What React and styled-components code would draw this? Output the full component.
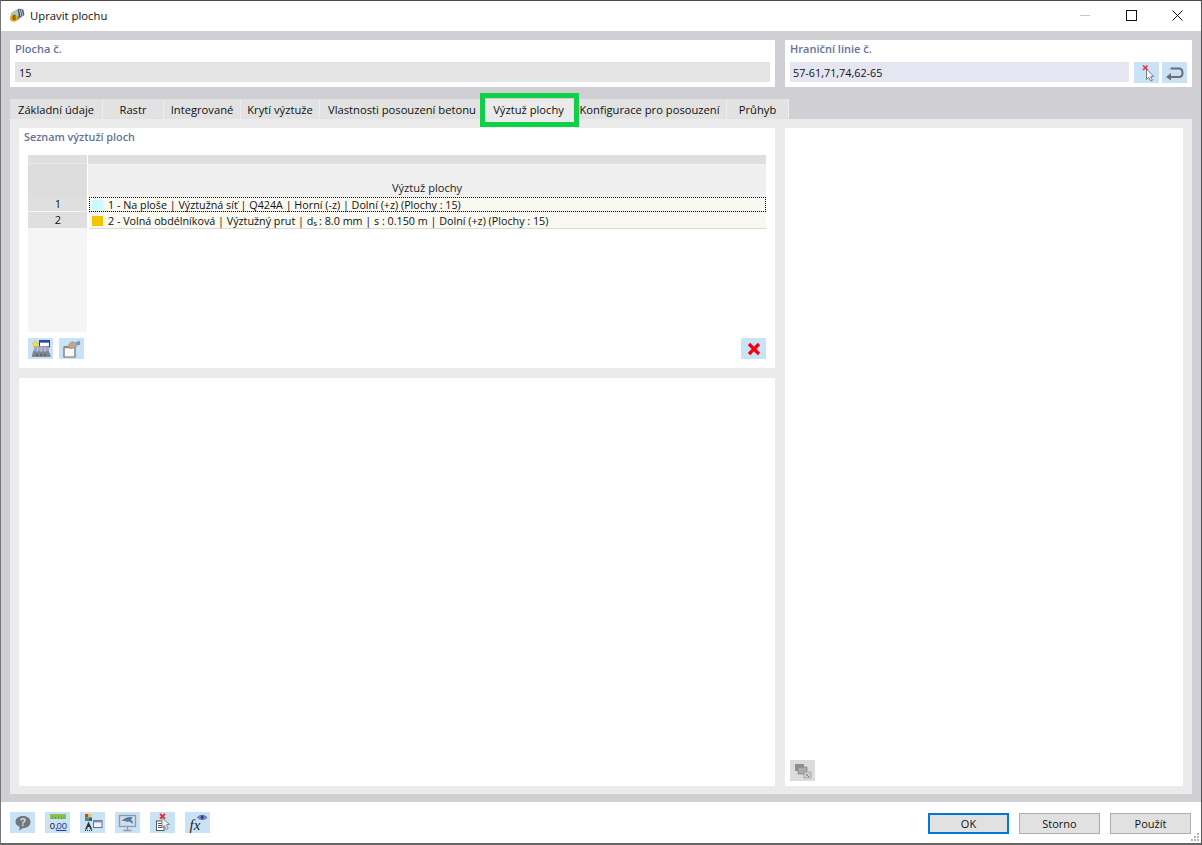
import React from "react"
import styled, { createGlobalStyle } from "styled-components"

const GlobalStyle = createGlobalStyle`
  html, body { margin: 0; padding: 0; background: #d0cfd4; }
  * { box-sizing: border-box; }
  body { font-family: "Open Sans", "Noto Sans", "Liberation Sans", sans-serif; font-size: 11px; color: #111; }
`

const Window = styled.div`
  width: 1202px;
  height: 845px;
  display: flex;
  flex-direction: column;
  background: #fff;
  border: 1px solid #777;
  border-top: 1px solid #4c4a48;
  border-right-color: #555;
  border-bottom: 2px solid #666;
  overflow: hidden;
`

const TitleBar = styled.div`
  height: 30px;
  flex: none;
  display: flex;
  align-items: center;
  padding: 0 0 2px 8px;
  background: #fff;
`

const TitleText = styled.span`
  margin-left: 5px;
  font-size: 11.3px;
  color: #111;
`

const WindowButtons = styled.div`
  margin-left: auto;
  display: flex;
  align-items: center;
  padding-right: 1px;
`

const WindowButton = styled.div`
  width: 46px;
  height: 28px;
  display: flex;
  align-items: center;
  justify-content: center;
`

const Body = styled.div`
  flex: 1;
  min-height: 0;
  background: #d0cfd4;
  padding: 9px 9px 8px 9px;
  display: flex;
  flex-direction: column;
`

const TopRow = styled.div`
  display: grid;
  grid-template-columns: 765px 407px;
  gap: 10px;
  height: 47px;
  flex: none;
`

const HeadPanel = styled.div`
  background: #fff;
  padding: 2px 5px 5px;
  display: flex;
  flex-direction: column;
`

const HeadLabel = styled.div`
  height: 17px;
  line-height: 13px;
  font-size: 11px;
  font-weight: 600;
  color: #64729a;
`

const FieldRow = styled.div`
  display: flex;
  margin-top: 3px;
  height: 20px;
`

const Field = styled.div`
  flex: 1;
  height: 20px;
  line-height: 21px;
  font-size: 10.8px;
  padding-left: ${p => p.$pad || 4}px;
  background: ${p => p.$bg || "#e4e4e4"};
`

const IconButton = styled.div`
  width: 25px;
  height: 21px;
  flex: none;
  margin-left: ${p => p.$gap || 0}px;
  background: ${p => p.$bg || "#cae2f6"};
  display: flex;
  align-items: center;
  justify-content: center;
`

const TabStrip = styled.div`
  display: flex;
  margin-top: 12px;
  height: 20px;
  flex: none;
`

const Tab = styled.div`
  position: relative;
  width: ${p => p.$w}px;
  height: 20px;
  line-height: 21px;
  font-size: 11.2px;
  text-align: center;
  white-space: nowrap;
  background: ${p => (p.$active ? "#ebebeb" : "#e2e2e2")};
  border-right: 1px solid #ededed;
`

const Highlight = styled.div`
  position: absolute;
  z-index: 1;
  left: -5px;
  right: -7px;
  top: -6px;
  bottom: -8px;
  border: 5px solid #0fd149;
`

const TabPage = styled.div`
  flex: 1;
  min-height: 0;
  background: #ebebeb;
  padding: 9px 9px 8px 9px;
  display: grid;
  grid-template-columns: 756px 398px;
  column-gap: 10px;
`

const LeftColumn = styled.div`
  display: flex;
  flex-direction: column;
  gap: 10px;
  min-height: 0;
`

const ListPanel = styled.div`
  height: 240px;
  flex: none;
  background: #fff;
  padding: 2px 9px 0;
`

const SectionLabel = styled.div`
  height: 25px;
  margin-left: -4px;
  line-height: 13px;
  font-size: 10.8px;
  font-weight: 600;
  color: #64729a;
`

const Table = styled.div`
  display: grid;
  grid-template-columns: 59px 1fr;
  column-gap: 1px;
  height: 177px;
`

const NumberColumn = styled.div`
  display: flex;
  flex-direction: column;
  background: #f5f5f5;
`

const CornerTop = styled.div`
  height: 9px;
  flex: none;
  background: #dfdfdf;
  border-bottom: 1px solid #e8e8e8;
`

const CornerCell = styled.div`
  height: 33px;
  flex: none;
  background: #dddddd;
`

const NumberCell = styled.div`
  height: ${p => p.$h}px;
  line-height: ${p => p.$h - 2}px;
  flex: none;
  padding-left: 1px;
  text-align: center;
  background: #dfdfdf;
  border-bottom: 1px solid #f5f5f5;
`

const DataColumn = styled.div`
  display: flex;
  flex-direction: column;
`

const HeaderTop = styled.div`
  height: 9px;
  flex: none;
  background: #dfdfdf;
`

const HeaderCell = styled.div`
  height: 33px;
  flex: none;
  padding-bottom: 2px;
  background: #efefef;
  display: flex;
  align-items: flex-end;
  justify-content: center;
  font-size: 11.1px;
  color: #222;
  border-top: 1px solid #f4f4f4;
`

const DataRow = styled.div`
  height: ${p => p.$h}px;
  flex: none;
  display: flex;
  align-items: center;
  padding: 1px 0 0 3px;
  margin-left: 1px;
  font-size: 10.75px;
  background: #f9f9f1;
  white-space: pre;
  border-bottom: 1px solid #dcdcd6;
  outline: ${p => (p.$focus ? "1px dotted #111" : "none")};
  outline-offset: -1px;
`

const Swatch = styled.span`
  width: 11px;
  height: 10px;
  flex: none;
  margin-right: 5px;
  background: ${p => p.$color};
`

const Sub = styled.span`
  font-size: 8px;
  position: relative;
  top: 2px;
  margin-right: 2px;
`

const ListTools = styled.div`
  display: flex;
  margin-top: 6px;
  gap: 6px;
`

const DeleteSlot = styled.div`
  margin-left: auto;
`

const Blank = styled.div`
  flex: 1;
  min-height: 0;
  background: #fff;
`

const RightPanel = styled.div`
  background: #fff;
  display: flex;
  flex-direction: column;
  justify-content: flex-end;
  padding: 0 0 5px 5px;
`

const Footer = styled.div`
  height: 41px;
  flex: none;
  position: relative;
  background: #fff;
  display: flex;
  align-items: flex-start;
  padding: 10px 10px 0 9px;
`

const FooterTools = styled.div`
  display: flex;
  gap: 10px;
`

const FooterButtons = styled.div`
  margin-left: auto;
  margin-top: 1px;
  display: flex;
  gap: 10px;
`

const DialogButton = styled.div`
  width: 81px;
  height: 21px;
  line-height: ${p => (p.$primary ? 18 : 19)}px;
  text-align: center;
  font-size: 11px;
  background: #e1e1e1;
  border: ${p => (p.$primary ? "2px solid #0078d7" : "1px solid #adadad")};
`

const Grip = styled.svg`
  position: absolute;
  right: 1px;
  bottom: 1px;
`

const AppIcon = () => (
  <svg width="16" height="16" viewBox="0 0 16 16">
    <path d="M2 6 L10 1.5 L14.5 2.5 L15.5 8 L8 13.5 L3 12 Z" fill="#7f8da0" />
    <path d="M9 2 L14 3 L15 8 L10 10.5 Z" fill="#3f4f66" />
    <path d="M10.5 2.5 L12 9.5 M12.5 3 L13.6 8.5" stroke="#c7d0dc" strokeWidth="1" />
    <path d="M2 6 L8.5 3 L9.5 9 L4 11 Z" fill="#b9c2ce" />
    <circle cx="4.8" cy="11" r="3.8" fill="#dcae1e" />
    <text x="3.2" y="13.4" fontSize="6.5" fontWeight="700" fill="#5a4400" fontFamily="Liberation Sans, sans-serif">6</text>
  </svg>
)

const CursorX = () => (
  <svg width="22" height="20" viewBox="0 0 22 20">
    <path d="M10.5 6 L10.5 16.5 L12.8 14.4 L14.6 18 L16.4 17.2 L14.7 13.6 L17.8 13.4 Z" fill="#f6f6f6" stroke="#808080" strokeWidth="1" />
    <path d="M7 2.5 L11.5 7 M11.5 2.5 L7 7" stroke="#f0303c" strokeWidth="1.7" />
  </svg>
)

const ReturnArrow = () => (
  <svg width="20" height="16" viewBox="0 0 20 16">
    <path d="M5 12 L14 12 Q17.5 12 17.5 8 Q17.5 3.5 14 3.5 L5.5 3.5" fill="none" stroke="#6b6f73" strokeWidth="2" />
    <path d="M1 12 L6 8 L6 15.5 Z" fill="#6b6f73" />
  </svg>
)

const NewSurfaceIcon = () => (
  <svg width="20" height="18" viewBox="0 0 20 18">
    <rect x="8.5" y="0.5" width="10" height="6.5" fill="#fff" stroke="#2a3f8f" />
    <rect x="8.5" y="0.5" width="10" height="2.2" fill="#2a4fb0" />
    <path d="M4 6 L18 6 L18 12 L2 12 Z" fill="#8488a8" />
    <path d="M3 8 H18 M3 10 H18 M7 6 L6 12 M10.5 6 L10 12 M14 6 L14 12" stroke="#d8dae8" strokeWidth="0.7" />
    <path d="M4.5 0.5 L5.5 3 L8 3.2 L6 5 L6.8 7.5 L4.5 6.2 L2.2 7.5 L3 5 L1 3.2 L3.5 3 Z" fill="#f7e13a" stroke="#c9b21a" strokeWidth="0.4" />
    <path d="M2 12 L18 12 L19.5 14.5 L19.5 17 L1 17 L1 14.5 Z" fill="#85858d" />
    <circle cx="6" cy="15" r="0.8" fill="#1f2f80" />
    <circle cx="10" cy="15" r="0.8" fill="#1f2f80" />
    <circle cx="14" cy="15" r="0.8" fill="#1f2f80" />
  </svg>
)

const CopyHandIcon = () => (
  <svg width="20" height="18" viewBox="0 0 20 18">
    <path d="M2 7 L2 17 L13 17 L13 7 Z" fill="#f8f8f8" stroke="#6f6f6f" strokeWidth="1.2" />
    <rect x="2" y="6" width="11" height="2.2" fill="#8a8a8a" />
    <path d="M6 7 Q7 2.5 10 2 Q13.5 1.5 14.5 4 Q15.5 7 12 8 L8 8.5 Z" fill="#c4a696" stroke="#8d7468" strokeWidth="0.5" />
    <path d="M13.5 2.5 L17.5 0.5 L18.5 4.5 L15.5 5.5 Z" fill="#6f97cf" />
  </svg>
)

const RedCross = () => (
  <svg width="14" height="14" viewBox="0 0 14 14">
    <path d="M2 2 L12 12 M12 2 L2 12" stroke="#f5000f" strokeWidth="3.2" />
  </svg>
)

const CopyGrayIcon = () => (
  <svg width="20" height="18" viewBox="0 0 20 18">
    <rect x="2" y="2" width="9" height="7" fill="#8f8f8f" />
    <rect x="5" y="5" width="9" height="7" fill="#aaa" stroke="#777" strokeWidth="0.6" />
    <path d="M11 10 L18 10 L18 16 L11 16 Z" fill="#cfcfcf" stroke="#8c8c8c" strokeWidth="0.6" />
    <path d="M13 12 L16 15" stroke="#6f6f6f" />
  </svg>
)

const HelpIcon = () => (
  <svg width="18" height="18" viewBox="0 0 18 18">
    <path d="M9 2 C13.5 2 16.5 4.5 16.5 8 C16.5 11.5 13.5 14 9.5 14 L5 16.5 L5.8 13 C3.2 12 1.5 10.2 1.5 8 C1.5 4.5 4.5 2 9 2 Z" fill="#757575" />
    <text x="9" y="12.2" textAnchor="middle" fontSize="10.5" fontWeight="700" fill="#cae2f6" fontFamily="Liberation Sans, sans-serif">?</text>
  </svg>
)

const DecimalsIcon = () => (
  <svg width="18" height="19" viewBox="0 0 18 19">
    <rect x="1" y="1" width="16" height="5" fill="#8cc152" />
    <path d="M3.5 3.5 V6 M6.5 3.5 V6 M9.5 3.5 V6 M12.5 3.5 V6 M15 3.5 V6" stroke="#5d8a2a" strokeWidth="0.7" />
    <text x="0.8" y="15.5" fontSize="9.5" fill="#222" fontFamily="Liberation Sans, sans-serif">0,</text>
    <text x="7.4" y="15.5" fontSize="9.5" fill="#1d3f9a" fontFamily="Liberation Sans, sans-serif">00</text>
    <path d="M7.4 17.5 H17.5" stroke="#1d3f9a" />
  </svg>
)

const DisplayTreeIcon = () => (
  <svg width="20" height="19" viewBox="0 0 20 19">
    <rect x="2" y="1" width="3.5" height="3.5" fill="#e53030" />
    <rect x="5.5" y="1" width="3.5" height="3.5" fill="#f0d020" />
    <rect x="2" y="4.5" width="3.5" height="3.5" fill="#35a040" />
    <rect x="5.5" y="4.5" width="3.5" height="3.5" fill="#3058c0" />
    <path d="M5.5 8.5 L2 16.5 H4 L4.8 14 H6.5 L7.3 16.5 H9.3 Z" fill="#333" />
    <path d="M2 17.5 H10" stroke="#333" strokeDasharray="1 1" />
    <rect x="10.5" y="7.5" width="8.5" height="7" fill="#f4f4f4" stroke="#5f6f8f" />
    <rect x="10.5" y="7.5" width="8.5" height="2" fill="#7d93bf" />
  </svg>
)

const MonitorIcon = () => (
  <svg width="19" height="18" viewBox="0 0 19 18">
    <rect x="1.5" y="1.5" width="16" height="11" fill="#d3dce7" stroke="#8f9aa6" strokeWidth="1.3" />
    <path d="M3.5 7 Q8 2 14.5 3.2 L13 6 Q15.5 7 14.5 10 Q11.5 6.5 9 8 Q6.5 6 3.5 7 Z" fill="#4f7ca5" />
    <path d="M9.5 13 V16 M5.5 16.5 H13.5" stroke="#8f9aa6" strokeWidth="1.3" />
  </svg>
)

const DocCursorIcon = () => (
  <svg width="20" height="19" viewBox="0 0 20 19">
    <rect x="3.5" y="8" width="7.5" height="9.5" fill="#fff" stroke="#555" />
    <path d="M5 10.5 H9.5 M5 12.5 H9.5 M5 14.5 H9.5" stroke="#555" />
    <path d="M9 5 L9 14.5 L11.3 12.5 L13.3 16.5 L15.2 15.5 L13.4 11.7 L16.5 11.4 Z" fill="#f2f2f2" stroke="#8b8b8b" />
    <path d="M7 0.8 L12 5.6 M12 0.8 L7 5.6" stroke="#e52030" strokeWidth="1.7" />
  </svg>
)

const FormulaIcon = () => (
  <svg width="20" height="20" viewBox="0 0 20 20">
    <text x="1.5" y="17" fontSize="15" fontStyle="italic" fontFamily="Liberation Serif, serif" fill="#222">fx</text>
    <path d="M9.5 4.5 Q14 0 19 4.5 Q14 8.5 9.5 4.5 Z" fill="#8d9bd4" stroke="#3a4a94" strokeWidth="0.8" />
    <circle cx="14.2" cy="4.2" r="1.5" fill="#27347c" />
  </svg>
)

const tabs = [
  ["Základní údaje", 93],
  ["Rastr", 61],
  ["Integrované", 77],
  ["Krytí výztuže", 79],
  ["Vlastnosti posouzení betonu", 165],
  ["Výztuž plochy", 88, true],
  ["Konfigurace pro posouzení", 154],
  ["Průhyb", 62],
]

const footerIcons = [HelpIcon, DecimalsIcon, DisplayTreeIcon, MonitorIcon, DocCursorIcon, FormulaIcon]

const App = () => (
  <Window>
    <GlobalStyle />
    <TitleBar>
      <AppIcon />
      <TitleText>Upravit plochu</TitleText>
      <WindowButtons>
        <WindowButton>
          <svg width="10" height="10"><path d="M0 5.5 H10" stroke="#c8c8c8" /></svg>
        </WindowButton>
        <WindowButton>
          <svg width="11" height="11"><rect x="0.5" y="0.5" width="10" height="10" fill="none" stroke="#111" /></svg>
        </WindowButton>
        <WindowButton>
          <svg width="11" height="11"><path d="M0.5 0.5 L10.5 10.5 M10.5 0.5 L0.5 10.5" stroke="#111" /></svg>
        </WindowButton>
      </WindowButtons>
    </TitleBar>
    <Body>
      <TopRow>
        <HeadPanel>
          <HeadLabel>Plocha č.</HeadLabel>
          <FieldRow><Field>15</Field></FieldRow>
        </HeadPanel>
        <HeadPanel>
          <HeadLabel>Hraniční linie č.</HeadLabel>
          <FieldRow>
            <Field $bg="#e6e6f2" $pad={3}>57-61,71,74,62-65</Field>
            <IconButton $gap={5}><CursorX /></IconButton>
            <IconButton $gap={3}><ReturnArrow /></IconButton>
          </FieldRow>
        </HeadPanel>
      </TopRow>
      <TabStrip>
        {tabs.map(([label, w, active]) => (
          <Tab key={label} $w={w} $active={active}>
            {label}
            {active && <Highlight />}
          </Tab>
        ))}
      </TabStrip>
      <TabPage>
        <LeftColumn>
          <ListPanel>
            <SectionLabel>Seznam výztuží ploch</SectionLabel>
            <Table>
              <NumberColumn>
                <CornerTop />
                <CornerCell />
                <NumberCell $h={15}>1</NumberCell>
                <NumberCell $h={17}>2</NumberCell>
              </NumberColumn>
              <DataColumn>
                <HeaderTop />
                <HeaderCell>Výztuž plochy</HeaderCell>
                <DataRow $h={15} $focus>
                  <Swatch $color="#c8fbff" />
                  1 - Na ploše | Výztužná síť | Q424A | Horní (-z) | Dolní (+z) (Plochy : 15)
                </DataRow>
                <DataRow $h={17}>
                  <Swatch $color="#f5c400" />
                  2 - Volná obdélníková | Výztužný prut | d<Sub>s</Sub>: 8.0 mm | s : 0.150 m | Dolní (+z) (Plochy : 15)
                </DataRow>
              </DataColumn>
            </Table>
            <ListTools>
              <IconButton><NewSurfaceIcon /></IconButton>
              <IconButton><CopyHandIcon /></IconButton>
              <DeleteSlot>
                <IconButton><RedCross /></IconButton>
              </DeleteSlot>
            </ListTools>
          </ListPanel>
          <Blank />
        </LeftColumn>
        <RightPanel>
          <IconButton $bg="#dcdcdc"><CopyGrayIcon /></IconButton>
        </RightPanel>
      </TabPage>
    </Body>
    <Footer>
      <FooterTools>
        {footerIcons.map((Icon, i) => (
          <IconButton key={i}><Icon /></IconButton>
        ))}
      </FooterTools>
      <FooterButtons>
        <DialogButton $primary>OK</DialogButton>
        <DialogButton>Storno</DialogButton>
        <DialogButton>Použít</DialogButton>
      </FooterButtons>
      <Grip width="10" height="10" viewBox="0 0 10 10">
        <path d="M7 1h2v2H7z M4 4h2v2H4z M7 4h2v2H7z M1 7h2v2H1z M4 7h2v2H4z M7 7h2v2H7z" fill="#b5b5b5" />
      </Grip>
    </Footer>
  </Window>
)

export default App
